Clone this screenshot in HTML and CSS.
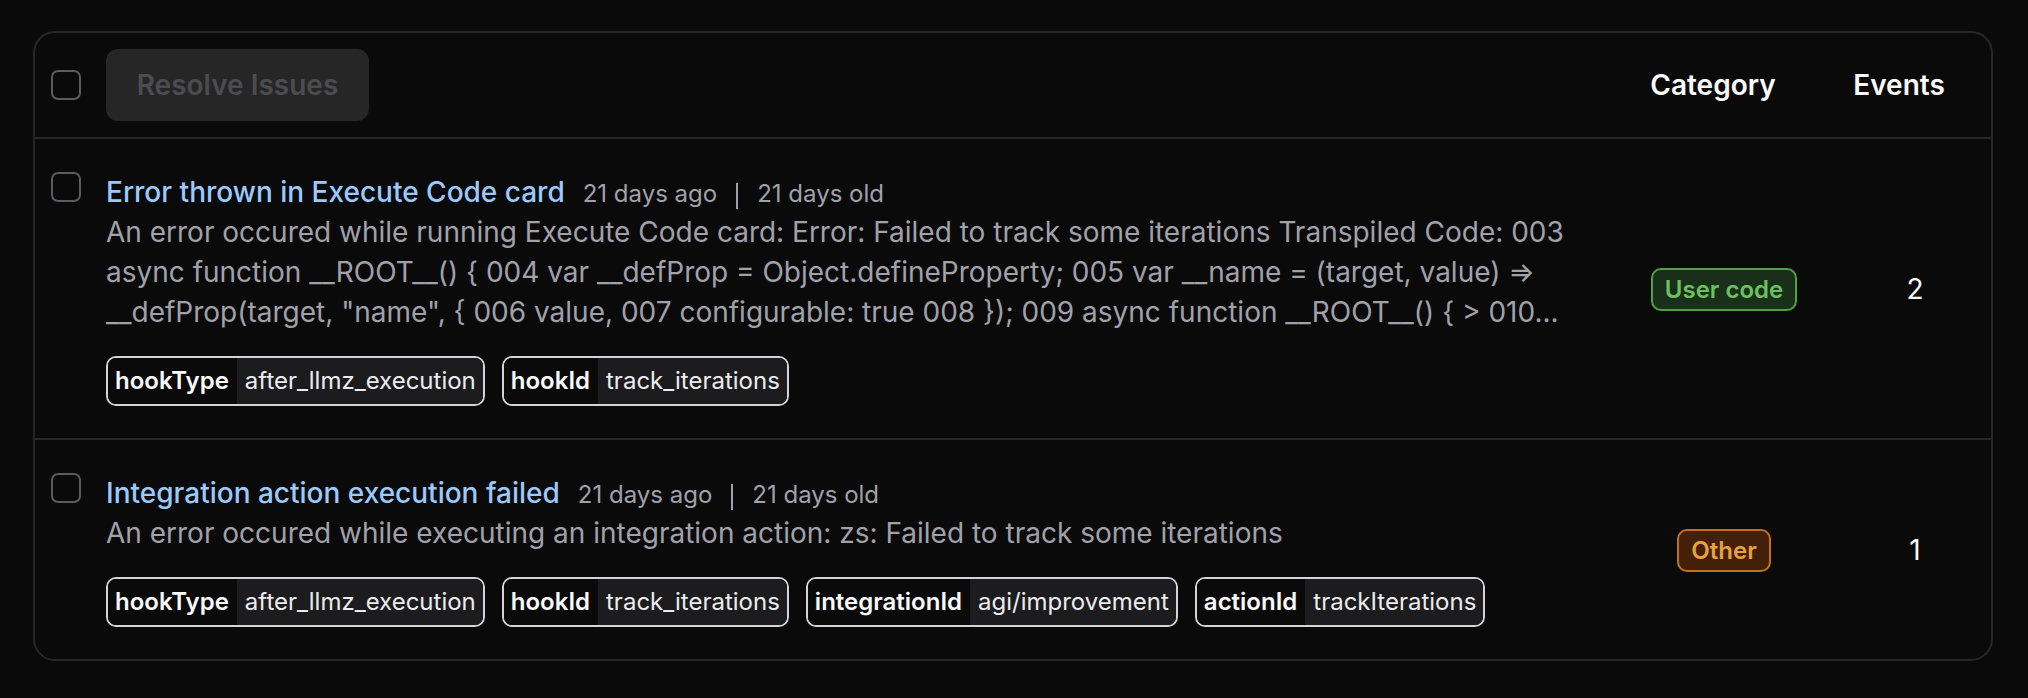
FILE: index.html
```html
<!DOCTYPE html>
<html lang="en">
<head>
<meta charset="utf-8">
<title>Issues</title>
<link rel="stylesheet" href="styles.css">
</head>
<body>
<div class="page">
  <div class="card">
    <div class="head">
      <span class="checkbox" role="checkbox" aria-checked="false"></span>
      <div class="head-main">
        <button class="btn" disabled>Resolve Issues</button>
      </div>
      <div class="th th-cat">Category</div>
      <div class="th th-events">Events</div>
    </div>

    <div class="row">
      <span class="checkbox" role="checkbox" aria-checked="false"></span>
      <div class="main">
        <div class="title-line">
          <a class="title" href="#">Error thrown in Execute Code card</a>
          <div class="meta"><span>21 days ago</span><span class="sep"></span><span>21 days old</span></div>
        </div>
        <p class="desc">An error occured while running Execute Code card: Error: Failed to track some iterations Transpiled Code: 003 async function __ROOT__() { 004 var __defProp = Object.defineProperty; 005 var __name = (target, value) =&gt; __defProp(target, "name", { 006 value, 007 configurable: true 008 }); 009 async function __ROOT__() { &gt; 010...</p>
        <div class="tags">
          <span class="tag"><span class="tag-key">hookType</span><span class="tag-val">after_llmz_execution</span></span>
          <span class="tag"><span class="tag-key">hookId</span><span class="tag-val">track_iterations</span></span>
        </div>
      </div>
      <div class="cat"><span class="badge badge-green">User code</span></div>
      <div class="events">2</div>
    </div>

    <div class="row">
      <span class="checkbox" role="checkbox" aria-checked="false"></span>
      <div class="main">
        <div class="title-line">
          <a class="title" href="#">Integration action execution failed</a>
          <div class="meta"><span>21 days ago</span><span class="sep"></span><span>21 days old</span></div>
        </div>
        <p class="desc">An error occured while executing an integration action: zs: Failed to track some iterations</p>
        <div class="tags">
          <span class="tag"><span class="tag-key">hookType</span><span class="tag-val">after_llmz_execution</span></span>
          <span class="tag"><span class="tag-key">hookId</span><span class="tag-val">track_iterations</span></span>
          <span class="tag"><span class="tag-key">integrationId</span><span class="tag-val">agi/improvement</span></span>
          <span class="tag"><span class="tag-key">actionId</span><span class="tag-val">trackIterations</span></span>
        </div>
      </div>
      <div class="cat"><span class="badge badge-orange">Other</span></div>
      <div class="events">1</div>
    </div>
  </div>
</div>
</body>
</html>
```

FILE: styles.css
```css
html, body {
  margin: 0;
  background: #0a0a0b;
}

body {
  font-family: Inter, "Noto Sans", sans-serif;
  color: #fafafa;
}

.page {
  padding: 31px 35px 0 33px;
}

.card {
  border: 2px solid #27272a;
  border-radius: 22px;
  background: #0a0a0b;
}

.head,
.row {
  display: grid;
  grid-template-columns: 30px 1fr 230px 152px;
  padding-left: 16px;
}

.head {
  padding-top: 16px;
  padding-bottom: 16px;
  align-items: center;
}

.row {
  border-top: 2px solid #27272a;
  padding-top: 33px;
  padding-bottom: 32px;
  align-items: start;
}

.head-main,
.main {
  padding: 0 14px 0 25px;
  min-width: 0;
}

.checkbox {
  display: block;
  width: 30px;
  height: 30px;
  box-sizing: border-box;
  border: 2px solid #5b5b60;
  border-radius: 7px;
}

.btn {
  display: block;
  width: 263px;
  height: 72px;
  border: 0;
  border-radius: 12px;
  background: #262627;
  color: #4c4c4f;
  font-family: inherit;
  font-size: 28px;
  font-weight: 600;
  padding: 0;
}

.th {
  font-size: 28px;
  line-height: 40px;
  font-weight: 600;
  color: #fafafa;
  text-align: center;
}

.th-cat {
  padding-right: 22px;
}

.th-events {
  padding-right: 32px;
}

.title-line {
  display: flex;
  align-items: baseline;
  gap: 18px;
  line-height: 40px;
}

.title {
  color: #9cc9fb;
  font-size: 28px;
  font-weight: 500;
  text-decoration: none;
  white-space: nowrap;
}

.meta {
  display: flex;
  align-items: center;
  gap: 19px;
  font-size: 24px;
  line-height: 32px;
  color: #a1a1aa;
  white-space: nowrap;
}

.sep {
  display: block;
  width: 2px;
  height: 26px;
  margin-top: 4px;
  background: #a1a1aa;
}

.desc {
  margin: 0;
  font-size: 28px;
  line-height: 40px;
  color: #a1a1aa;
  display: -webkit-box;
  -webkit-line-clamp: 3;
  -webkit-box-orient: vertical;
  overflow: hidden;
}

.tags {
  display: flex;
  flex-wrap: wrap;
  gap: 17px;
  margin-top: 24px;
}

.tag {
  display: flex;
  border: 2px solid #d4d4d8;
  border-radius: 10px;
  overflow: hidden;
  font-size: 24px;
  line-height: 32px;
  white-space: nowrap;
}

.tag-key {
  padding: 7px 8px 7px 7px;
  background: #0a0a0b;
  color: #fafafa;
  font-weight: 600;
}

.tag-val {
  padding: 7px 7px 7px 8px;
  background: #1c1c1e;
  color: #ececee;
}

.cat {
  align-self: center;
  display: flex;
  justify-content: center;
}

.badge {
  font-size: 24px;
  font-weight: 600;
  line-height: 31px;
  padding: 4px 12px;
  border: 2px solid;
  border-radius: 10px;
}

.badge-green {
  color: #6cc05f;
  border-color: #52a044;
  background: #1a2f19;
}

.badge-orange {
  color: #e9a23b;
  border-color: #c2701d;
  background: #44200a;
}

.events {
  align-self: center;
  text-align: center;
  font-size: 28px;
  line-height: 40px;
  color: #fafafa;
}
```
